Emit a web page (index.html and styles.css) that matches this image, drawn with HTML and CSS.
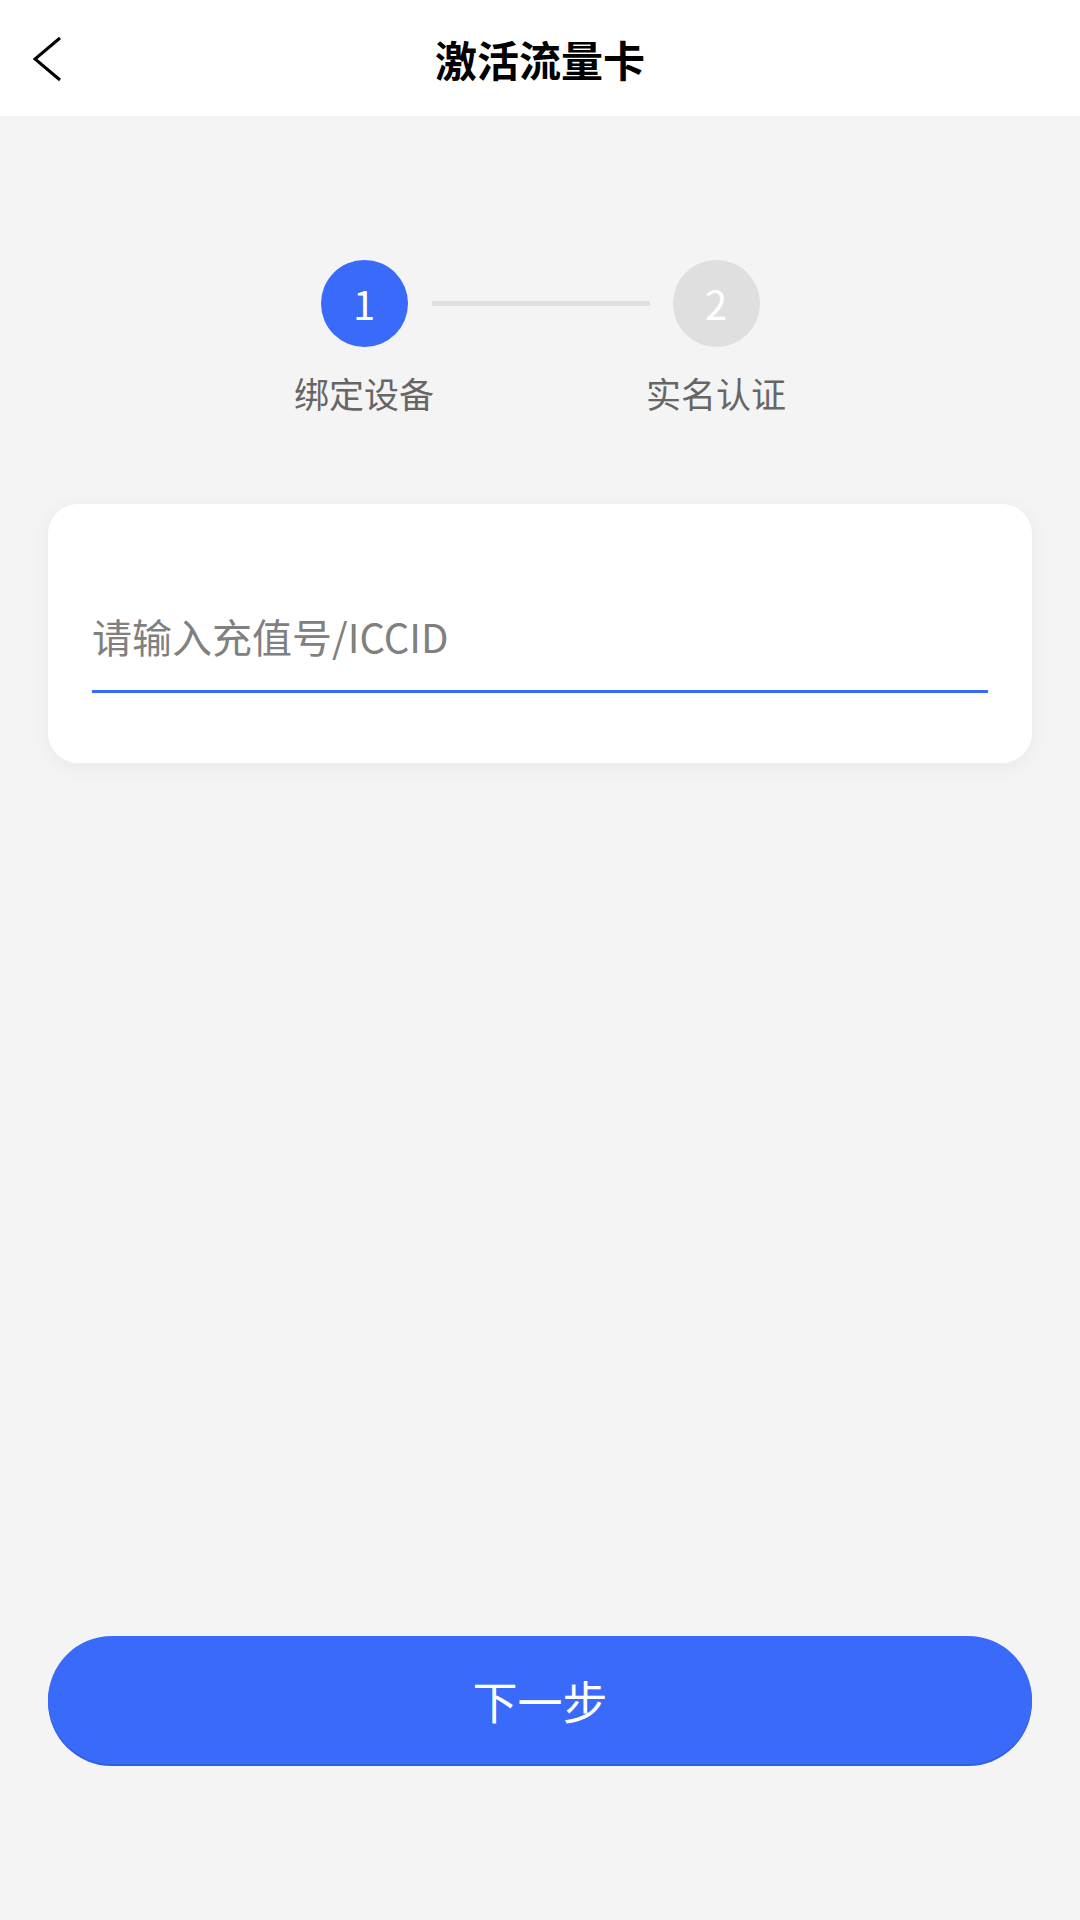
FILE: index.html
```html
<!DOCTYPE html>
<html lang="zh-CN">
<head>
    <meta charset="UTF-8">
    <meta name="viewport" content="width=device-width, initial-scale=1.0">
    <title>激活流量卡</title>
    <link rel="stylesheet" href="styles.css">
</head>
<body>
    <div class="page">
        <header class="topbar">
            <a class="back" href="#">
                <svg width="30" height="46" viewBox="0 0 30 46">
                    <polyline points="27,2 2,23 27,44" fill="none" stroke="#000" stroke-width="3"/>
                </svg>
            </a>
            <h1 class="title">激活流量卡</h1>
            <span></span>
        </header>

        <div class="steps">
            <div class="step active">
                <div class="dot">1</div>
                <div class="label">绑定设备</div>
            </div>
            <div class="step-line"></div>
            <div class="step">
                <div class="dot">2</div>
                <div class="label">实名认证</div>
            </div>
        </div><!-- steps -->

        <div class="card">
            <input class="field" type="text" placeholder="请输入充值号/ICCID">
        </div><!-- card -->

        <div class="spacer"></div>

        <button class="next" type="button">下一步</button>
    </div><!-- page -->
</body>
</html>
```

FILE: styles.css
```css
*{margin: 0;padding: 0;box-sizing: border-box;}
html, body{
    width: 100%;
    height: 100%;
}

body{
    background: #f4f4f4;
    font-family: "Noto Sans CJK SC", "Noto Sans", sans-serif;
}

.page{
    display: flex;
    flex-direction: column;
    min-height: 100%;
}

.topbar{
    display: grid;
    grid-template-columns: 116px 1fr 116px;
    align-items: center;
    height: 116px;
    background: #fff;
}

.back{
    display: flex;
    padding-left: 33px;
    padding-top: 2px;
}

.title{
    text-align: center;
    font-size: 42px;
    font-weight: 700;
    color: #000;
}

.steps{
    display: flex;
    justify-content: center;
    align-items: flex-start;
    padding-top: 144px;
}

.step{
    width: 87px;
    display: flex;
    flex-direction: column;
    align-items: center;
}

.dot{
    width: 87px;
    height: 87px;
    border-radius: 50%;
    background: #dfdfdf;
    color: #fff;
    font-size: 40px;
    line-height: 87px;
    text-align: center;
}

.step.active .dot{
    background: #3a6afa;
}

.label{
    margin-top: 22px;
    font-size: 35px;
    line-height: 48px;
    color: #666;
    white-space: nowrap;
}

.step-line{
    width: 218px;
    height: 5px;
    margin: 41px 23px 0 24px;
    background: #e0e0e0;
}

.card{
    margin: 87px 48px 0;
    padding: 89px 44px 70px;
    background: #fff;
    border-radius: 30px;
    box-shadow: 0 4px 20px rgba(0,0,0,0.05);
}

.field{
    display: block;
    width: 100%;
    height: 100px;
    padding-bottom: 11px;
    border: none;
    border-bottom: 3px solid #3a6afa;
    outline: none;
    background: transparent;
    font-family: inherit;
    font-size: 40px;
    color: #333;
}

.field::placeholder{
    color: #808080;
}

.spacer{
    flex: 1;
}

.next{
    margin: 0 48px 156px;
    height: 128px;
    border: none;
    border-radius: 64px;
    background: #3a6afa;
    box-shadow: 0 2px 0 #2f5ee6;
    color: #fff;
    font-family: inherit;
    font-size: 45px;
}
```
